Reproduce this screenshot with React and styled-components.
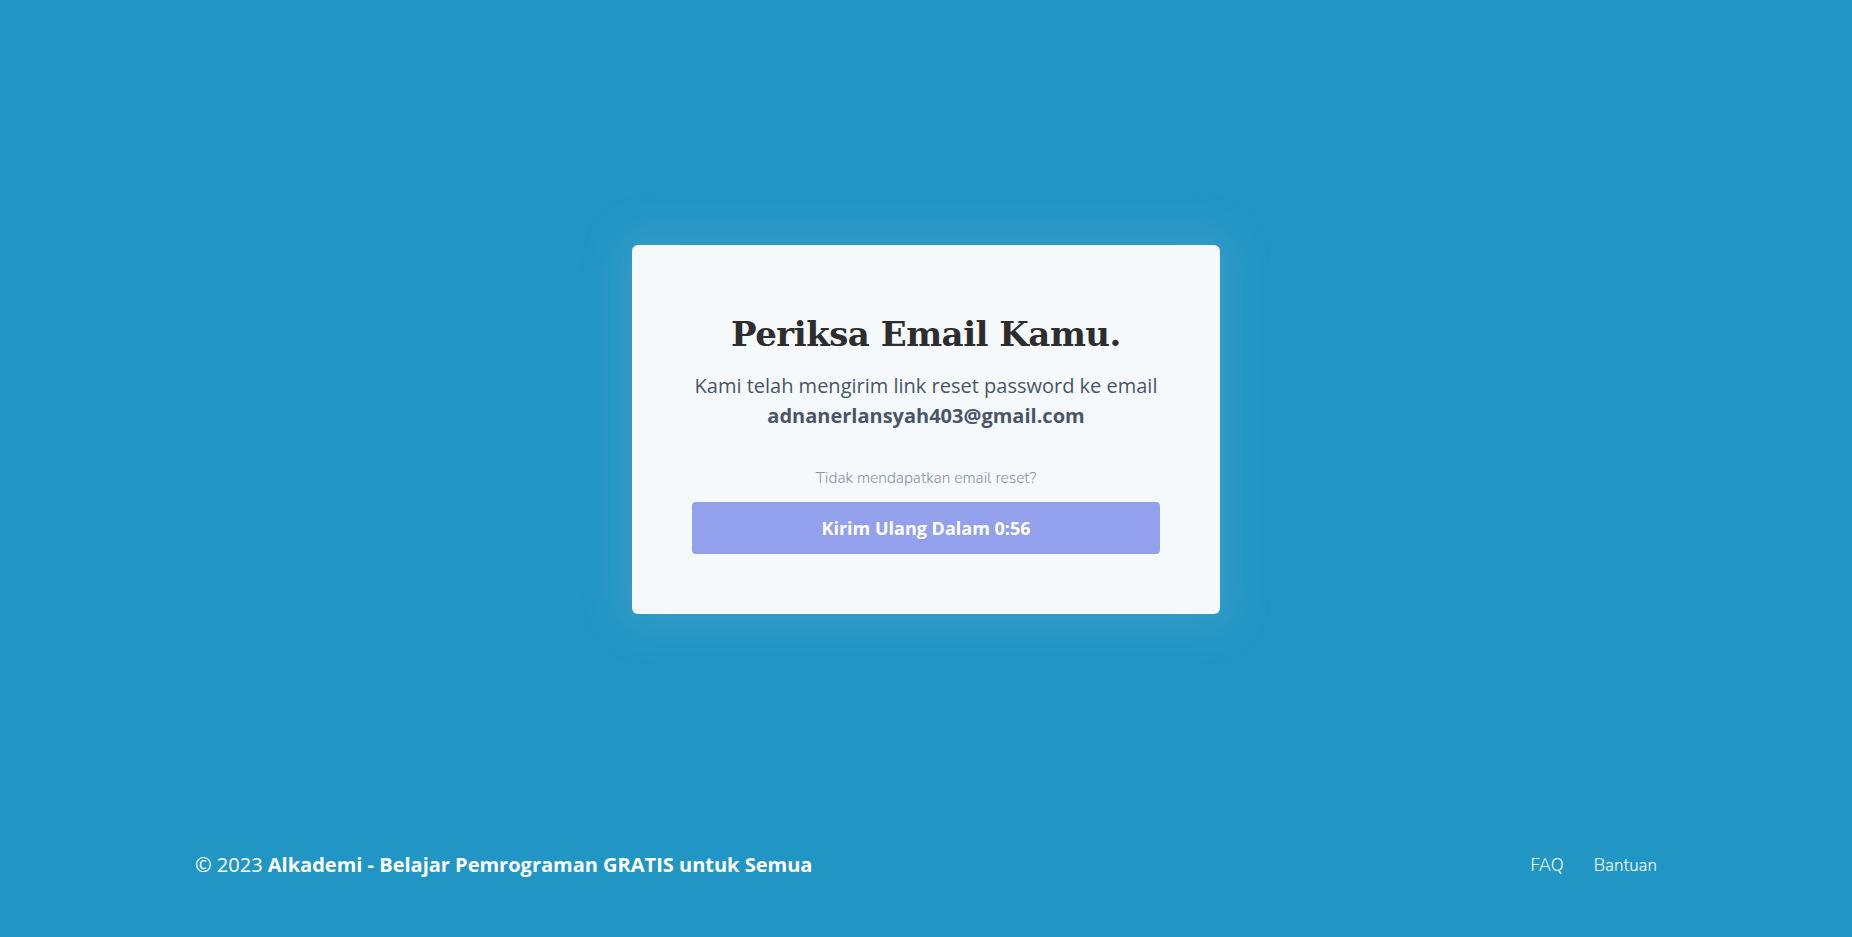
import React from "react";
import styled, { createGlobalStyle } from "styled-components";

const GlobalStyle = createGlobalStyle`
  html, body {
    margin: 0;
    padding: 0;
    background: #2196c5;
    font-family: "Open Sans", "Noto Sans", sans-serif;
    -webkit-font-smoothing: antialiased;
  }

  * {
    box-sizing: border-box;
  }
`

const Page = styled.div`
  min-height: 100vh;
  display: flex;
  flex-direction: column;
  background: #2196c5;
`

const Main = styled.main`
  flex: 1;
  display: flex;
  align-items: center;
  justify-content: center;
  padding-top: 38px;
`

const Card = styled.div`
  width: 588px;
  background: #f5f9fc;
  border-radius: 6px;
  padding: 67px 60px 60px;
  text-align: center;
  box-shadow: 0 0 40px 12px rgba(150, 185, 210, 0.18);
`

const Title = styled.h1`
  margin: 0 0 15px;
  font-family: "DejaVu Serif", "Liberation Serif", serif;
  font-size: 34px;
  font-weight: 700;
  line-height: 1.3;
  color: #2d2d2d;
  letter-spacing: -0.5px;
`

const Message = styled.p`
  margin: 0;
  font-size: 20px;
  line-height: 30px;
  color: #4a5568;
`

const Email = styled.strong`
  display: block;
  font-weight: 700;
  color: #4a5568;
`

const Hint = styled.p`
  margin: 36px 0 13px;
  font-family: "Nunito", "Lato", sans-serif;
  font-weight: 300;
  font-size: 15.5px;
  line-height: 22px;
  color: #8a93a3;
`

const ResendButton = styled.button`
  width: 100%;
  height: 52px;
  border: none;
  border-radius: 4px;
  background: #93a1ec;
  color: #ffffff;
  font-family: "Open Sans", "Noto Sans", sans-serif;
  font-weight: 700;
  font-size: 18px;
  cursor: not-allowed;
`

const Footer = styled.footer`
  padding: 32px 0 60px;
`

const FooterInner = styled.div`
  width: 1462px;
  margin: 0 auto;
  display: flex;
  justify-content: space-between;
  align-items: center;
  color: #ffffff;
`

const Copyright = styled.p`
  margin: 0;
  font-size: 20px;
  line-height: 24px;

  b {
    font-weight: 700;
  }
`

const Links = styled.nav`
  display: flex;
  gap: 30px;
`

const FooterLink = styled.a`
  font-family: "Nunito", "Lato", sans-serif;
  font-weight: 300;
  font-size: 17px;
  color: #ffffff;
  text-decoration: none;
`

const App = () => {
  return (
    <>
      <GlobalStyle />
      <Page>
        <Main>
          <Card>
            <Title>Periksa Email Kamu.</Title>
            <Message>
              Kami telah mengirim link reset password ke email
              <Email>adnanerlansyah403@gmail.com</Email>
            </Message>
            <Hint>Tidak mendapatkan email reset?</Hint>
            <ResendButton disabled>Kirim Ulang Dalam 0:56</ResendButton>
          </Card>
        </Main>
        <Footer>
          <FooterInner>
            <Copyright>
              © 2023 <b>Alkademi - Belajar Pemrograman GRATIS untuk Semua</b>
            </Copyright>
            <Links>
              <FooterLink href="#">FAQ</FooterLink>
              <FooterLink href="#">Bantuan</FooterLink>
            </Links>
          </FooterInner>
        </Footer>
      </Page>
    </>
  )
}

export default App;
